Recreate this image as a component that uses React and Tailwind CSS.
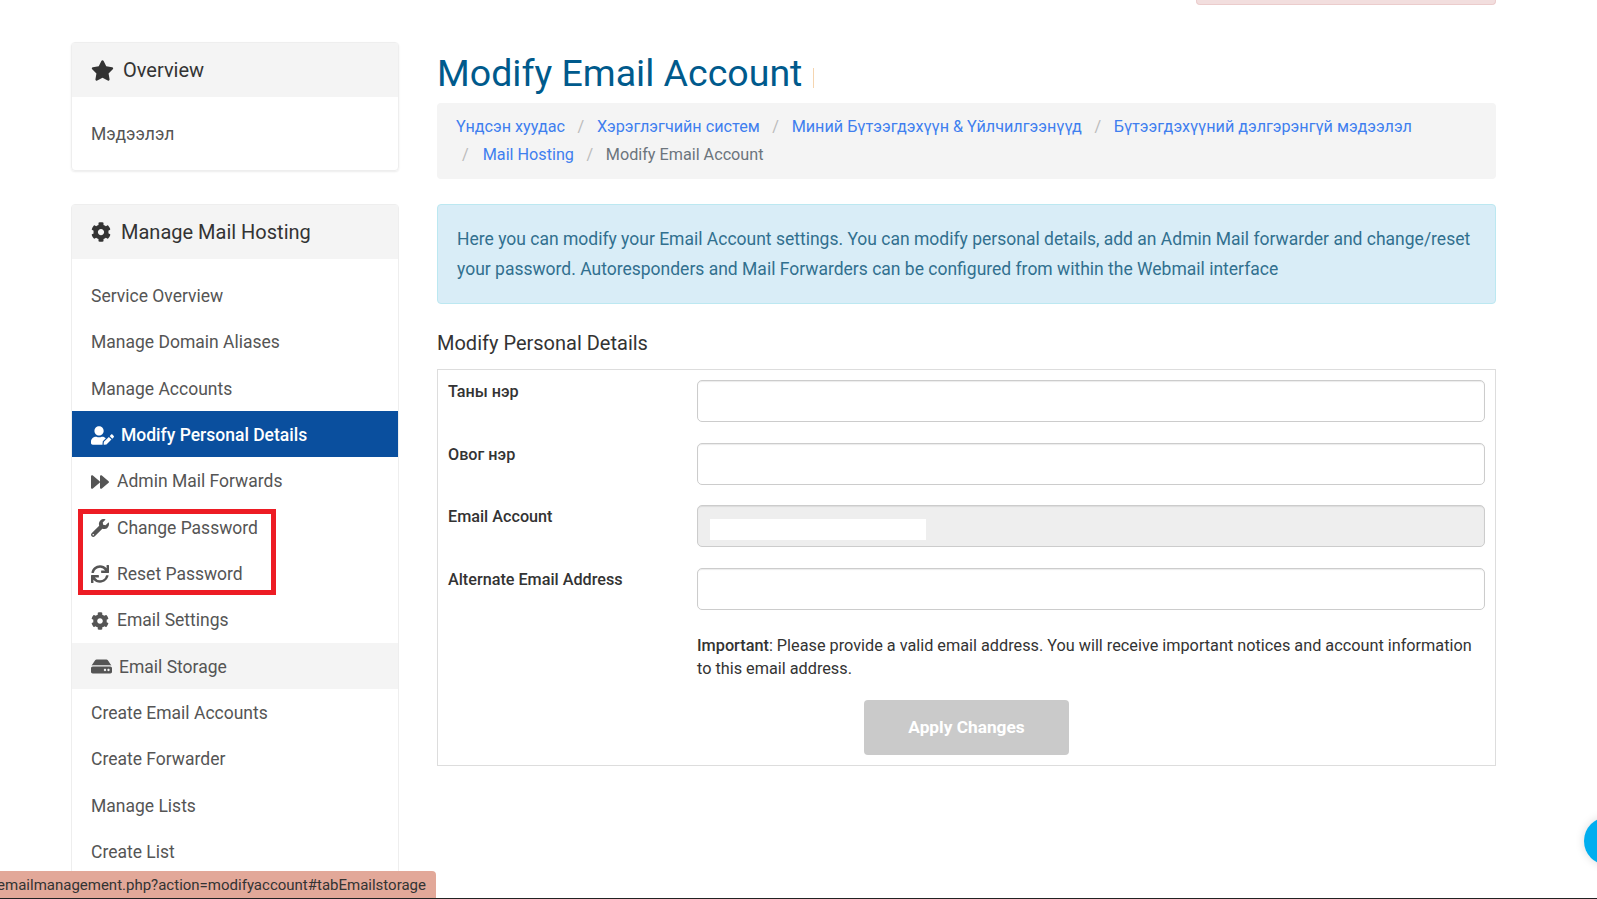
import React from "react";
import { FaStar, FaCog, FaUserEdit, FaForward, FaWrench, FaSync, FaHdd } from "react-icons/fa";

const Item = ({ icon: Icon, iconClass = "w-[18px] h-[18px]", gap = "gap-[8px]", children, active, muted }) => (
  <a
    className={`flex h-[46.35px] items-center pt-[2px] px-[19px] text-[17.5px] ${gap} ${
      active ? "bg-[#0a4f9e] font-medium text-white" : muted ? "bg-[#f4f4f4] text-[#555]" : "text-[#555]"
    }`}
  >
    {Icon && <Icon className={`shrink-0 ${iconClass}`} />}
    {children}
  </a>
);

const Field = ({ label, disabled }) => (
  <div className="flex h-[62.7px] items-start">
    <label className="w-[249px] shrink-0 text-[16.2px] font-medium leading-[24px] text-[#333]">{label}</label>
    <div className={`h-[42px] flex-1 rounded-[5px] border border-[#ccc] shadow-[inset_0_1px_1px_rgba(0,0,0,0.08)] ${disabled ? "bg-[#eee] px-[12px] pt-[13px]" : "bg-white"}`}>
      {disabled && <div className="h-[21px] w-[216px] bg-white" />}
    </div>
  </div>
);

const Sep = ({ className = "px-[12.6px]" }) => <span className={`text-[#bbb] ${className}`}>/</span>;

export default function App() {
  return (
    <div className="relative h-[899px] overflow-hidden bg-white font-['Roboto',sans-serif] text-[#333]">
      <div className="absolute right-[101px] top-0 h-[5px] w-[300px] rounded-b-[4px] border border-t-0 border-[#ebcccc] bg-[#f2dede]" />

      <div className="flex gap-[38px] pl-[71px] pr-[101px] pt-[42px]">
        <aside className="w-[328px] shrink-0">
          <div className="rounded-[4px] border border-[#eee] shadow-[0_1px_2px_rgba(0,0,0,0.08)]">
            <div className="flex h-[54px] items-center gap-[9px] bg-[#f4f4f4] px-[19px] text-[20px] text-[#333]">
              <FaStar className="text-[23px]" />
              Overview
            </div>
            <div className="flex h-[73px] items-center px-[19px] pt-[2px] text-[17.5px] text-[#555]">Мэдээлэл</div>
          </div>

          <div className="mt-[33px] rounded-t-[4px] border border-[#eee]">
            <div className="flex h-[54px] items-center gap-[10px] bg-[#f4f4f4] px-[19px] text-[20px] text-[#333]">
              <FaCog className="text-[20px]" />
              Manage Mail Hosting
            </div>
            <div className="pt-[13px]">
              <Item>Service Overview</Item>
              <Item>Manage Domain Aliases</Item>
              <Item>Manage Accounts</Item>
              <Item icon={FaUserEdit} iconClass="h-[23px] w-[23px]" gap="gap-[7px]" active>Modify Personal Details</Item>
              <Item icon={FaForward}>Admin Mail Forwards</Item>
              <Item icon={FaWrench}>Change Password</Item>
              <Item icon={FaSync}>Reset Password</Item>
              <Item icon={FaCog}>Email Settings</Item>
              <Item icon={FaHdd} iconClass="h-[21px] w-[21px]" gap="gap-[7px]" muted>Email Storage</Item>
              <Item>Create Email Accounts</Item>
              <Item>Create Forwarder</Item>
              <Item>Manage Lists</Item>
              <Item>Create List</Item>
            </div>
          </div>
        </aside>

        <main className="min-w-0 flex-1">
          <div className="flex items-center gap-[11px]">
            <h1 className="pt-[2px] text-[37.5px] leading-[58px] text-[#005a8c]">Modify Email Account</h1>
            <span className="mt-[12px] h-[20px] w-px bg-[#f5d5b0]" />
          </div>

          <div className="mt-[1px] h-[76px] rounded-[4px] bg-[#f4f4f4] px-[19px] pt-[10px] text-[16.2px] leading-[28px]">
            <div className="flex items-center text-[#3f7fef]">
              <a>Үндсэн хуудас</a>
              <Sep />
              <a>Хэрэглэгчийн систем</a>
              <Sep />
              <a>Миний Бүтээгдэхүүн & Үйлчилгээнүүд</a>
              <Sep />
              <a>Бүтээгдэхүүний дэлгэрэнгүй мэдээлэл</a>
            </div>
            <div className="flex items-center pl-[6px] text-[#3f7fef]">
              <Sep className="pr-[14px]" />
              <a>Mail Hosting</a>
              <Sep />
              <span className="text-[#6c757d]">Modify Email Account</span>
            </div>
          </div>

          <div className="mt-[25px] h-[100px] rounded-[4px] border border-[#bce8f1] bg-[#d9edf7] p-[19px] text-[17.5px] leading-[30px] text-[#31708f]">
            Here you can modify your Email Account settings. You can modify personal details, add an Admin Mail forwarder and change/reset your password. Autoresponders and Mail Forwarders can be configured from within the Webmail interface
          </div>

          <h3 className="mt-[25px] text-[20px] leading-[28px] text-[#333]">Modify Personal Details</h3>

          <div className="mt-[12px] border border-[#ddd] px-[10px] pb-[10px] pt-[10px]">
            <Field label="Таны нэр" />
            <Field label="Овог нэр" />
            <Field label="Email Account" disabled />
            <Field label="Alternate Email Address" />
            <p className="ml-[249px] mt-[3px] text-[16.25px] leading-[23px] text-[#333]">
              <strong className="font-medium">Important</strong>: Please provide a valid email address. You will receive important notices and account information to this email address.
            </p>
            <div className="mt-[20px] flex justify-center">
              <button className="h-[55px] w-[205px] rounded-[4px] bg-[#cacaca] pt-[2px] text-[17.3px] font-bold text-white">Apply Changes</button>
            </div>
          </div>
        </main>
      </div>

      <div className="absolute left-[-70px] top-[871px] flex h-[27px] w-[506px] items-center justify-end rounded-tr-[4px] bg-[#e2a899] pr-[10px] pt-[2px] text-[15px] text-[#333]">
        /emailmanagement.php?action=modifyaccount#tabEmailstorage
      </div>
      <div className="absolute bottom-0 left-0 h-px w-full bg-[#222]" />
      <div className="absolute right-[-35px] top-[817px] h-[48px] w-[48px] rounded-full bg-[#00aeef] shadow-[0_0_10px_rgba(0,0,0,0.15)]" />
      <div className="pointer-events-none absolute left-[78px] top-[509px] h-[86px] w-[198px] border-[5px] border-[#ed1c24]" />
    </div>
  );
}
